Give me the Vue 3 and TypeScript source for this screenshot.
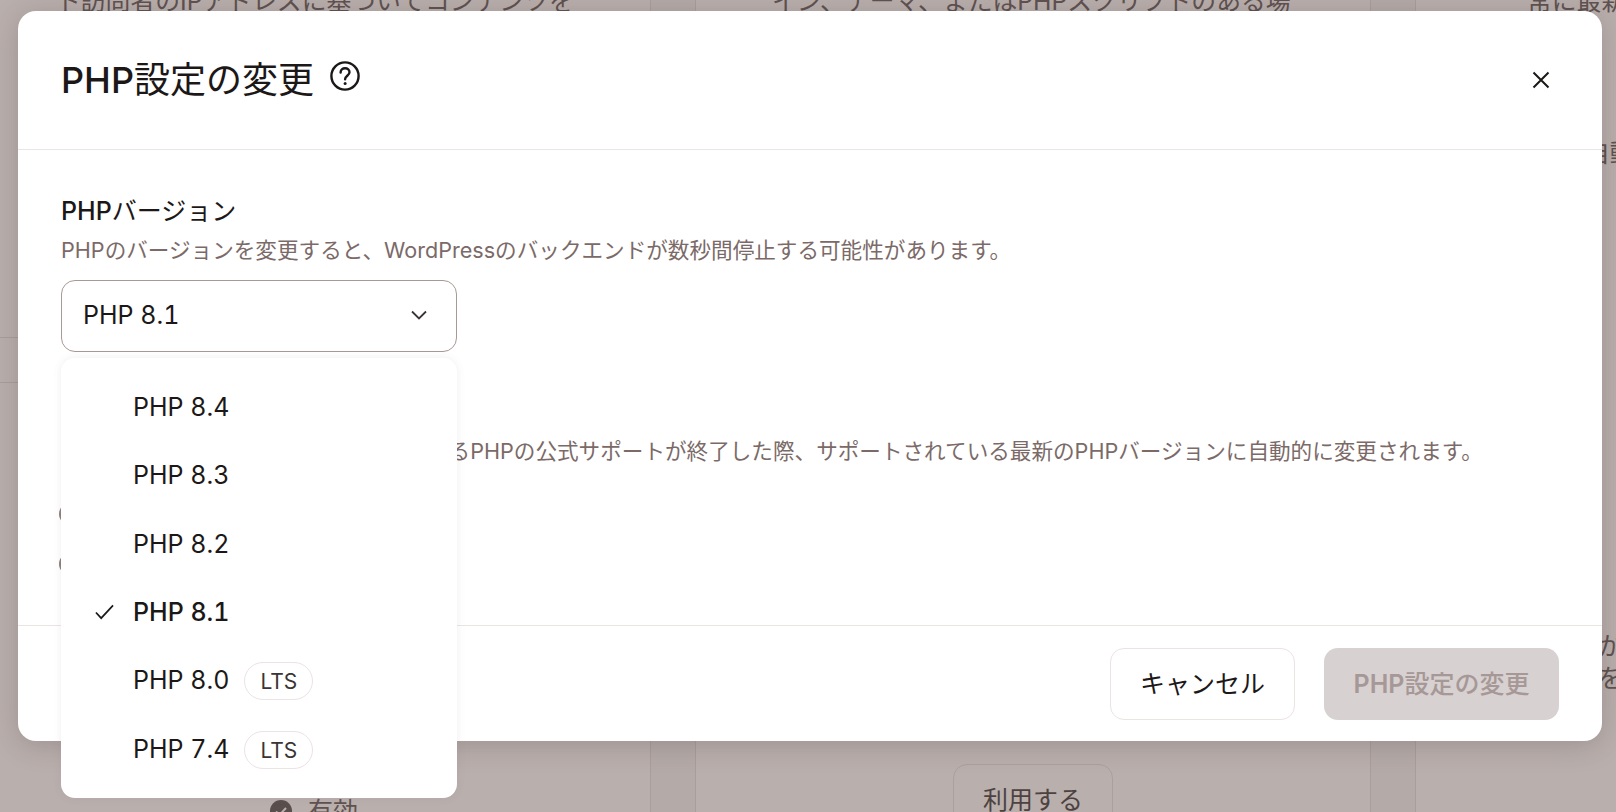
<template>
  <div class="page">
    <div class="backdrop">
      <div class="bg-col first">
        <p class="ghost top-a">ト訪問者のIPアドレスに基づいてコンテンツを</p>
        <div class="rule r1"></div>
        <div class="rule r2"></div>
        <div class="status">
          <svg class="status-dot" viewBox="0 0 22 22">
            <circle cx="11" cy="11" r="11" fill="#5a4e4c" />
            <path d="M6 11.5l3.5 3.5L16 8" fill="none" stroke="#b8aeac" stroke-width="2" />
          </svg>
          <span>有効</span>
        </div>
      </div>
      <div class="bg-gap"></div>
      <div class="bg-col second">
        <p class="ghost top-b">イン、テーマ、またはPHPスクリプトのある場</p>
        <button class="ghost-btn">利用する</button>
      </div>
      <div class="bg-gap"></div>
      <div class="bg-col third">
        <p class="ghost top-c">常に最新</p>
        <p class="ghost mid-c">自動</p>
        <p class="ghost low-c">か</p>
        <p class="ghost low-d">を</p>
      </div>
    </div>

    <div class="modal">
      <header class="modal-head">
        <h1><b>PHP</b>設定の変更</h1>
        <svg class="help" viewBox="0 0 32 32" fill="none" stroke="#1c1818">
          <circle cx="16" cy="16" r="13.6" stroke-width="2.4" />
          <path d="M11.6 12.6c0-2.6 2-4.3 4.5-4.3s4.4 1.6 4.4 3.9c0 3.4-4.4 3.6-4.4 7" stroke-width="2.4" stroke-linecap="round" />
          <circle cx="16.1" cy="23.4" r="1.5" fill="#1c1818" stroke="none" />
        </svg>
        <svg class="close" viewBox="0 0 18 18" fill="none" stroke="#1c1818" stroke-width="2">
          <path d="M1.5 1.5l15 15M16.5 1.5l-15 15" />
        </svg>
      </header>

      <div class="modal-body">
        <section class="field">
          <h2><b>PHP</b>バージョン</h2>
          <p>PHPのバージョンを変更すると、WordPressのバックエンドが数秒間停止する可能性があります。</p>
          <div class="select-wrap">
            <div class="select">
              <span>PHP 8.1</span>
              <svg viewBox="0 0 16 10" fill="none" stroke="#3a3434" stroke-width="1.8">
                <path d="M1 1.5l7 7 7-7" />
              </svg>
            </div>
            <ul class="menu">
              <li v-for="opt in versions" :key="opt.label" :class="{ selected: opt.label === current }">
                <svg v-if="opt.label === current" class="check" viewBox="0 0 20 16" fill="none" stroke="#1c1818" stroke-width="1.8">
                  <path d="M1 8.5l5.5 6L19 1" />
                </svg>
                <span>{{ opt.label }}</span>
                <span v-if="opt.lts" class="lts">LTS</span>
              </li>
            </ul>
          </div>
        </section>

        <section class="field auto">
          <h2><b>PHP</b>バージョンの自動更新</h2>
          <p>お客様のサイトで現在ご使用になっているPHPの公式サポートが終了した際、サポートされている最新のPHPバージョンに自動的に変更されます。</p>
          <label class="radio"><span class="circle"></span>有効</label>
          <label class="radio"><span class="circle"></span>無効</label>
        </section>
      </div>

      <footer class="modal-foot">
        <button class="btn cancel">キャンセル</button>
        <button class="btn primary" disabled><b>PHP</b>設定の変更</button>
      </footer>
    </div>
  </div>
</template>

<script setup lang="ts">
interface PhpVersion {
  label: string;
  lts?: boolean;
}

const current = "PHP 8.1";

const versions: PhpVersion[] = [
  { label: "PHP 8.4" },
  { label: "PHP 8.3" },
  { label: "PHP 8.2" },
  { label: "PHP 8.1" },
  { label: "PHP 8.0", lts: true },
  { label: "PHP 7.4", lts: true },
];
</script>

<style>
html,
body {
  margin: 0;
  background: #b8aeac;
  overflow: hidden;
}
</style>

<style scoped>
.page {
  position: relative;
  width: 1616px;
  height: 812px;
  overflow: hidden;
  font-family: Inter, "Noto Sans CJK JP", sans-serif;
  font-variant-numeric: tabular-nums;
  color: #1c1818;
}

.backdrop {
  display: flex;
  height: 100%;
  background: #b8aeac;
}

.bg-col {
  position: relative;
  background: #b9afad;
}

.first {
  width: 651px;
  border-right: 1px solid #a99e9c;
  box-sizing: border-box;
}

.second {
  width: 676px;
  border-left: 1px solid #a99e9c;
  border-right: 1px solid #a99e9c;
  box-sizing: border-box;
}

.third {
  flex: 1;
  border-left: 1px solid #a99e9c;
}

.bg-gap {
  width: 44px;
  background: #b4aaa8;
}

.ghost {
  position: absolute;
  margin: 0;
  font-size: 24.8px;
  line-height: 32px;
  color: #5f5250;
  white-space: nowrap;
}

.top-a {
  left: 56px;
  top: -15px;
}

.top-b {
  left: 76px;
  top: -15px;
}

.top-c {
  left: 111px;
  top: -15px;
}

.mid-c {
  left: 169px;
  top: 137px;
}

.low-c {
  left: 182px;
  top: 630px;
}

.low-d {
  left: 182px;
  top: 662px;
}

.rule {
  position: absolute;
  left: 0;
  width: 18px;
  height: 1px;
  background: #a99e9c;
}

.r1 {
  top: 337px;
}

.r2 {
  top: 382px;
}

.status {
  position: absolute;
  left: 270px;
  top: 795px;
  display: flex;
  align-items: center;
  gap: 16px;
  font-size: 25px;
  line-height: 32px;
  color: #5f5250;
}

.status-dot {
  width: 22px;
  height: 22px;
}

.ghost-btn {
  position: absolute;
  left: 257px;
  top: 764px;
  width: 160px;
  height: 72px;
  padding: 0 0 4px;
  box-sizing: border-box;
  border: 1px solid #aba09e;
  border-radius: 14px;
  background: transparent;
  font: inherit;
  font-size: 25px;
  color: #4d4240;
}

.modal {
  position: absolute;
  left: 18px;
  top: 11px;
  width: 1584px;
  height: 730px;
  display: flex;
  flex-direction: column;
  background: #fff;
  border-radius: 18px;
  box-shadow: 0 4px 28px rgba(60, 40, 40, 0.22);
}

.modal-head {
  height: 138px;
  flex: none;
  display: flex;
  align-items: center;
  padding: 0 52px 0 43px;
  border-bottom: 1px solid #ece3e3;
  box-sizing: content-box;
}

.modal-head h1 {
  margin: 0;
  font-size: 36px;
  font-weight: 400;
  line-height: 48px;
}

b {
  font-weight: 500;
}

.help {
  width: 32px;
  height: 32px;
  margin: -8px 0 0 15px;
}

.close {
  width: 18px;
  height: 18px;
  margin-left: auto;
}

.modal-body {
  flex: 1;
  padding: 45px 43px 0;
}

.field h2 {
  margin: 0;
  font-size: 25px;
  font-weight: 400;
  line-height: 32px;
}

.field p {
  margin: 7px 0 0;
  font-size: 21.6px;
  line-height: 32px;
  color: #7b6a68;
}

.select-wrap {
  position: relative;
  width: 396px;
  margin-top: 14px;
}

.select {
  height: 72px;
  box-sizing: border-box;
  display: flex;
  align-items: center;
  justify-content: space-between;
  padding: 0 29px 3px 21px;
  border: 1px solid #a89896;
  border-radius: 14px;
  font-size: 25px;
  background: #fff;
}

.select svg {
  width: 16px;
  height: 10px;
}

.menu {
  position: absolute;
  z-index: 2;
  left: 0;
  top: 78px;
  width: 100%;
  height: 440px;
  margin: 0;
  padding: 15px 0 0;
  list-style: none;
  box-sizing: border-box;
  background: #fff;
  border-radius: 14px;
  box-shadow: 0 0 8px rgba(120, 100, 130, 0.1);
}

.menu li {
  position: relative;
  height: 68.3px;
  display: flex;
  align-items: center;
  gap: 15px;
  padding-left: 72px;
  font-size: 25px;
}

.menu li.selected {
  font-weight: 500;
}

.check {
  position: absolute;
  left: 34px;
  top: 26px;
  width: 19px;
  height: 16px;
}

.lts {
  display: flex;
  align-items: center;
  justify-content: center;
  width: 69px;
  height: 38px;
  margin-top: 2px;
  padding-top: 1px;
  box-sizing: border-box;
  border: 1px solid #ece3e3;
  border-radius: 19px;
  font-size: 21px;
  color: #3a3434;
}

.auto {
  margin-top: 44px;
}

.radio {
  display: flex;
  align-items: center;
  gap: 12px;
  height: 50px;
  font-size: 25px;
}

.auto .radio:first-of-type {
  margin-top: 22px;
}

.circle {
  width: 22px;
  height: 22px;
  box-sizing: border-box;
  border: 2px solid #8f7f7d;
  border-radius: 50%;
  margin-left: -2px;
}

.modal-foot {
  flex: none;
  height: 115px;
  display: flex;
  align-items: center;
  justify-content: flex-end;
  gap: 29px;
  padding: 0 43px;
  border-top: 1px solid #ece3e3;
}

.btn {
  height: 72px;
  padding: 0 0 3px;
  box-sizing: border-box;
  border-radius: 14px;
  font: inherit;
  font-size: 25px;
}

.cancel {
  width: 185px;
  background: #fff;
  border: 1px solid #ece3e3;
  color: #1c1818;
}

.primary {
  width: 235px;
  border: none;
  background: #d8d1d1;
  color: #a69896;
  font-weight: 500;
}

.primary b {
  font-weight: 600;
}
</style>
